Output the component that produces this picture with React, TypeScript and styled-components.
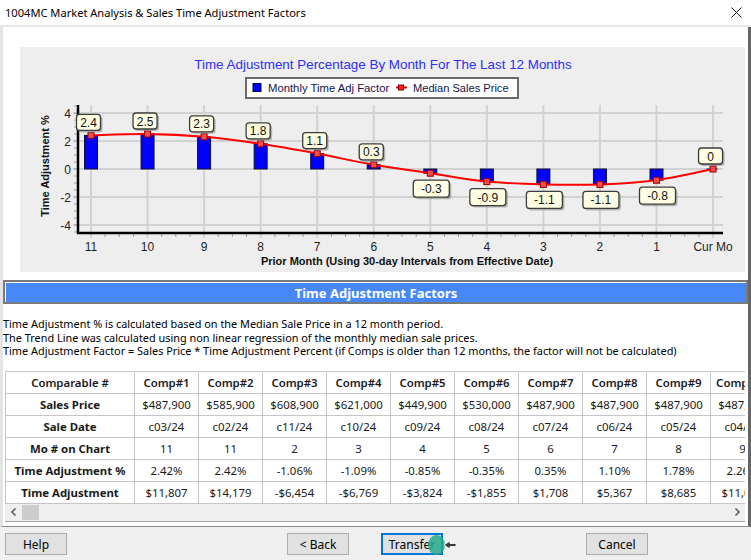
import styled, { createGlobalStyle } from 'styled-components'

const GlobalStyle = createGlobalStyle`
  html, body {
    margin: 0;
    padding: 0;
    background: #f0f0f0;
    overflow: hidden;
  }
  body {
    font-family: "Noto Sans", "Open Sans", sans-serif;
    color: #000;
  }
`

const months = ['11', '10', '9', '8', '7', '6', '5', '4', '3', '2', '1', 'Cur Mo']
const values = [2.4, 2.5, 2.3, 1.8, 1.1, 0.3, -0.3, -0.9, -1.1, -1.1, -0.8, 0]

const X0 = 91
const DX = 56.55
const Y0 = 169
const DY = 14
const PLOT_LEFT = 78
const PLOT_RIGHT = 723
const PLOT_TOP = 105
const AXIS_Y = 233

const px = (i: number) => X0 + i * DX
const py = (v: number) => Y0 - v * DY

const comps = [
  { name: 'Comp#1', price: '$487,900', date: 'c03/24', mo: '11', pct: '2.42%', adj: '$11,807' },
  { name: 'Comp#2', price: '$585,900', date: 'c02/24', mo: '11', pct: '2.42%', adj: '$14,179' },
  { name: 'Comp#3', price: '$608,900', date: 'c11/24', mo: '2', pct: '-1.06%', adj: '-$6,454' },
  { name: 'Comp#4', price: '$621,000', date: 'c10/24', mo: '3', pct: '-1.09%', adj: '-$6,769' },
  { name: 'Comp#5', price: '$449,900', date: 'c09/24', mo: '4', pct: '-0.85%', adj: '-$3,824' },
  { name: 'Comp#6', price: '$530,000', date: 'c08/24', mo: '5', pct: '-0.35%', adj: '-$1,855' },
  { name: 'Comp#7', price: '$487,900', date: 'c07/24', mo: '6', pct: '0.35%', adj: '$1,708' },
  { name: 'Comp#8', price: '$487,900', date: 'c06/24', mo: '7', pct: '1.10%', adj: '$5,367' },
  { name: 'Comp#9', price: '$487,900', date: 'c05/24', mo: '8', pct: '1.78%', adj: '$8,685' },
  { name: 'Comp#10', price: '$487,900', date: 'c04/24', mo: '9', pct: '2.26%', adj: '$11,026' },
]

const rows: { label: string; key: 'price' | 'date' | 'mo' | 'pct' | 'adj' }[] = [
  { label: 'Sales Price', key: 'price' },
  { label: 'Sale Date', key: 'date' },
  { label: 'Mo # on Chart', key: 'mo' },
  { label: 'Time Adjustment %', key: 'pct' },
  { label: 'Time Adjustment', key: 'adj' },
]

function smoothPath(pts: { x: number; y: number }[]) {
  let d = `M${pts[0].x},${pts[0].y}`
  for (let i = 0; i < pts.length - 1; i++) {
    const p0 = pts[i - 1] || pts[i]
    const p1 = pts[i]
    const p2 = pts[i + 1]
    const p3 = pts[i + 2] || p2
    const c1x = p1.x + (p2.x - p0.x) / 6
    const c1y = p1.y + (p2.y - p0.y) / 6
    const c2x = p2.x - (p3.x - p1.x) / 6
    const c2y = p2.y - (p3.y - p1.y) / 6
    d += ` C${c1x},${c1y} ${c2x},${c2y} ${p2.x},${p2.y}`
  }
  return d
}

function TrendChart() {
  const pts = values.map((v, i) => ({ x: px(i), y: py(v) }))
  const yMajor = [4, 2, 0, -2, -4]
  const yMinor: number[] = []
  for (let v = -4.5; v <= 4.5; v += 0.5) yMinor.push(v)
  const xMinor: number[] = []
  for (let i = 0; i < months.length - 1; i++) {
    for (let k = 1; k < 4; k++) xMinor.push(px(i) + (k * DX) / 4)
  }

  return (
    <svg width="725" height="225" viewBox="0 0 725 225">
      <g transform="translate(-20,-47)" fontFamily='"Liberation Sans", Arial, sans-serif'>
        <text x="383" y="69" textAnchor="middle" fontSize="13.4" fill="#2f2ff5">
          Time Adjustment Percentage By Month For The Last 12 Months
        </text>

        <rect x="246" y="78" width="272" height="20" fill="#fff" stroke="#6a6a6a" strokeWidth="2" />
        <rect x="253" y="83.5" width="8" height="8" fill="#0000ff" stroke="#000040" strokeWidth="1" />
        <text x="268" y="92" fontSize="11.3" fill="#14144a">Monthly Time Adj Factor</text>
        <line x1="396" y1="87.5" x2="407" y2="87.5" stroke="#e00000" strokeWidth="2" />
        <rect x="398.5" y="85" width="5" height="5" fill="#ff2020" stroke="#800000" strokeWidth="1" />
        <text x="413" y="92" fontSize="11.1" fill="#14144a">Median Sales Price</text>

        {months.map((m, i) => (
          <line key={`vg${m}`} x1={px(i)} y1={PLOT_TOP} x2={px(i)} y2={AXIS_Y + 5} stroke="#d2d2d2" strokeWidth="2" />
        ))}
        {yMajor.map(v => (
          <line key={`hg${v}`} x1={PLOT_LEFT - 5} y1={py(v)} x2={PLOT_RIGHT} y2={py(v)} stroke="#d2d2d2" strokeWidth="2" />
        ))}
        {yMinor.map(v => (
          <line key={`ym${v}`} x1={PLOT_LEFT - 4} y1={py(v)} x2={PLOT_LEFT} y2={py(v)} stroke="#a0a0a0" strokeWidth="1" />
        ))}
        {xMinor.map(x => (
          <line key={`xm${x}`} x1={x} y1={AXIS_Y} x2={x} y2={AXIS_Y + 4} stroke="#a0a0a0" strokeWidth="1" />
        ))}

        {values.map((v, i) => {
          const top = Math.min(py(v), Y0)
          const h = Math.max(Math.abs(v) * DY, 1.5)
          return (
            <rect
              key={`bar${i}`}
              x={px(i) - 6.5}
              y={v === 0 ? Y0 - 1 : top}
              width={v === 0 ? 11 : 13}
              height={v === 0 ? 2 : h}
              fill={v === 0 ? '#5a5aff' : '#0000ff'}
              stroke={v === 0 ? 'none' : '#101030'}
              strokeWidth="1"
            />
          )
        })}

        <line x1={PLOT_LEFT} y1={PLOT_TOP} x2={PLOT_LEFT} y2={AXIS_Y + 1} stroke="#000" strokeWidth="2.5" />
        <line x1={PLOT_LEFT - 1} y1={AXIS_Y} x2={PLOT_RIGHT} y2={AXIS_Y} stroke="#000" strokeWidth="2.5" />

        <path d={smoothPath(pts)} fill="none" stroke="#ff0000" strokeWidth="2" />
        {pts.map((p, i) => (
          <rect key={`mk${i}`} x={p.x - 3} y={p.y - 3} width="6" height="6" fill="#ff4a4a" stroke="#900000" strokeWidth="1" />
        ))}

        {values.map((v, i) => {
          const neg = v < 0
          const w = neg ? 36 : 24
          const h = neg ? 17 : 16
          const cx = neg ? px(i) + 1 : px(i) - 2.5
          const bx = cx - w / 2
          const by = neg ? py(v) + 7 : py(v) - 21
          return (
            <g key={`lb${i}`}>
              <rect x={bx + 2} y={by + 2} width={w} height={h} rx="3" fill="#8c8c8c" opacity="0.6" />
              <rect x={bx} y={by} width={w} height={h} rx="3" fill="#fffee2" stroke="#3c3c3c" strokeWidth="1.3" />
              <text x={cx} y={by + h / 2 + 4.5} textAnchor="middle" fontSize="12" fill="#111">
                {String(v)}
              </text>
            </g>
          )
        })}

        {yMajor.map(v => (
          <text key={`yl${v}`} x="71" y={py(v) + 4.5} textAnchor="end" fontSize="12" fill="#1e1e1e">
            {v}
          </text>
        ))}
        {months.map((m, i) => (
          <text key={`xl${m}`} x={px(i)} y="251" textAnchor="middle" fontSize="12" fill="#1e1e1e">
            {m}
          </text>
        ))}

        <text
          x="0"
          y="0"
          transform="translate(49,166) rotate(-90)"
          textAnchor="middle"
          fontSize="11"
          fontWeight="bold"
          fill="#111"
        >
          Time Adjustment %
        </text>
        <text x="407" y="265" textAnchor="middle" fontSize="11" fontWeight="bold" fill="#111">
          Prior Month (Using 30-day Intervals from Effective Date)
        </text>
      </g>
    </svg>
  )
}

function Chevron({ dir }: { dir: 'left' | 'right' }) {
  return (
    <svg width="8" height="10" viewBox="0 0 8 10">
      <path
        d={dir === 'left' ? 'M5.5 1.5 L2 5 L5.5 8.5' : 'M2.5 1.5 L6 5 L2.5 8.5'}
        fill="none"
        stroke="#606060"
        strokeWidth="1.6"
      />
    </svg>
  )
}

export default function App() {
  return (
    <>
      <GlobalStyle />
      <Window>
        <TitleBar>
          <TitleText>1004MC Market Analysis &amp; Sales Time Adjustment Factors</TitleText>
          <CloseButton>
            <svg width="11" height="11" viewBox="0 0 11 11">
              <path d="M0.5 0.5 L10.5 10.5 M10.5 0.5 L0.5 10.5" stroke="#111" strokeWidth="1" />
            </svg>
          </CloseButton>
        </TitleBar>

        <Panel>
          <ChartBox>
            <TrendChart />
          </ChartBox>

          <SectionHeader>
            <SectionInner>Time Adjustment Factors</SectionInner>
          </SectionHeader>

          <Notes>
            <p>Time Adjustment % is calculated based on the Median Sale Price in a 12 month period.</p>
            <p>The Trend Line was calculated using non linear regression of the monthly median sale prices.</p>
            <p>
              Time Adjustment Factor = Sales Price * Time Adjustment Percent (if Comps is older than 12 months, the
              factor will not be calculated)
            </p>
          </Notes>

          <GridFrame>
            <GridViewport>
              <Grid>
                <colgroup>
                  <col style={{ width: 129 }} />
                  {comps.map(c => (
                    <col key={c.name} style={{ width: 64 }} />
                  ))}
                </colgroup>
                <thead>
                  <tr>
                    <HeadCell>Comparable #</HeadCell>
                    {comps.map(c => (
                      <HeadCell key={c.name}>{c.name}</HeadCell>
                    ))}
                  </tr>
                </thead>
                <tbody>
                  {rows.map(r => (
                    <tr key={r.key}>
                      <LabelCell>{r.label}</LabelCell>
                      {comps.map(c => (
                        <Cell key={c.name}>{c[r.key]}</Cell>
                      ))}
                    </tr>
                  ))}
                </tbody>
              </Grid>
            </GridViewport>
            <ScrollBar>
              <ScrollArrow>
                <Chevron dir="left" />
              </ScrollArrow>
              <Thumb />
              <ScrollTrack />
              <ScrollArrow>
                <Chevron dir="right" />
              </ScrollArrow>
            </ScrollBar>
          </GridFrame>
        </Panel>

        <Footer>
          <Button>Help</Button>
          <Button $gap={220}>&lt; Back</Button>
          <Button $gap={32} $focused>
            Transfer
            <CursorHalo />
            <CursorArrow>
              <svg width="14" height="10" viewBox="0 0 14 10">
                <path d="M1 5 L7 1 L7 3.5 L13 3.5 L13 6.5 L7 6.5 L7 9 Z" fill="#3a3a3a" stroke="#fff" strokeWidth="0.8" />
              </svg>
            </CursorArrow>
          </Button>
          <Button $gap={143}>Cancel</Button>
        </Footer>
      </Window>
    </>
  )
}

const Window = styled.div`
  width: 751px;
  height: 560px;
  display: flex;
  flex-direction: column;
  background: #f0f0f0;
  overflow: hidden;
`

const TitleBar = styled.div`
  height: 25px;
  flex: none;
  display: flex;
  align-items: center;
  justify-content: space-between;
  padding: 0 9px 0 5px;
  background: #fff;
  border-bottom: 2px solid #e6e6e6;
`

const TitleText = styled.div`
  font-size: 11.1px;
  color: #000;
  white-space: nowrap;
`

const CloseButton = styled.div`
  display: flex;
  align-items: center;
`

const Panel = styled.div`
  height: 500px;
  flex: none;
  box-sizing: border-box;
  background: #fff;
  border-left: 3px solid #e4e4e4;
  border-right: 3px solid #666;
  border-bottom: 1px solid #8a8a8a;
  display: flex;
  flex-direction: column;
  padding-top: 20px;
`

const ChartBox = styled.div`
  margin-left: 17px;
  width: 725px;
  height: 225px;
  background: #eeeeee;
  display: flex;
`

const SectionHeader = styled.div`
  margin-top: 8px;
  height: 24px;
  box-sizing: border-box;
  border: 2px solid #7a7a7a;
  background: #4788f7;
  display: flex;
`

const SectionInner = styled.div`
  flex: 1;
  display: flex;
  align-items: center;
  justify-content: center;
  color: #fff;
  font-weight: bold;
  font-size: 13px;
  border-top: 1px solid #fff;
  border-left: 1px solid #fff;
`

const Notes = styled.div`
  margin-top: 13px;
  font-size: 10.9px;
  line-height: 13.5px;
  color: #000;
  p {
    margin: 0;
    white-space: nowrap;
  }
`

const GridFrame = styled.div`
  margin-top: 13px;
  margin-left: 2px;
  width: 740px;
  border-bottom: 1px solid #a0a0a0;
  display: flex;
  flex-direction: column;
`

const GridViewport = styled.div`
  width: 740px;
  overflow: hidden;
`

const Grid = styled.table`
  border-collapse: collapse;
  table-layout: fixed;
  width: 705px;
  font-size: 11.4px;
  color: #1a1a1a;
  border-top: 1px solid #a8a8a8;
  border-left: 1px solid #a8a8a8;
`

const HeadCell = styled.th`
  height: 21px;
  padding: 0;
  text-align: center;
  font-weight: 600;
  border: 1px solid #c6c6c6;
  white-space: nowrap;
  overflow: hidden;
`

const LabelCell = styled.td`
  height: 21px;
  padding: 0;
  text-align: center;
  font-weight: bold;
  border: 1px solid #c6c6c6;
  white-space: nowrap;
`

const Cell = styled.td`
  height: 21px;
  padding: 0;
  text-align: center;
  border: 1px solid #c6c6c6;
  white-space: nowrap;
  overflow: hidden;
`

const ScrollBar = styled.div`
  height: 17px;
  display: flex;
  align-items: stretch;
  background: #f0f0f0;
`

const ScrollArrow = styled.div`
  width: 17px;
  display: flex;
  align-items: center;
  justify-content: center;
`

const Thumb = styled.div`
  width: 17px;
  margin: 1px 0;
  background: #cdcdcd;
`

const ScrollTrack = styled.div`
  flex: 1;
`

const Footer = styled.div`
  flex: 1;
  display: flex;
  align-items: flex-start;
  padding: 6px 0 0 5px;
  background: #f0f0f0;
`

const Button = styled.div<{ $gap?: number; $focused?: boolean }>`
  position: relative;
  margin-left: ${p => p.$gap ?? 0}px;
  width: 62px;
  height: 22px;
  box-sizing: border-box;
  display: flex;
  align-items: center;
  justify-content: center;
  background: #e1e1e1;
  border: ${p => (p.$focused ? '2px solid #0078d7' : '1px solid #adadad')};
  font-size: 12px;
  color: #000;
`

const CursorHalo = styled.div`
  position: absolute;
  left: 45px;
  top: 0px;
  width: 17px;
  height: 20px;
  border-radius: 50%;
  background: rgba(38, 170, 140, 0.85);
`

const CursorArrow = styled.div`
  position: absolute;
  left: 60px;
  top: 5px;
  display: flex;
`
